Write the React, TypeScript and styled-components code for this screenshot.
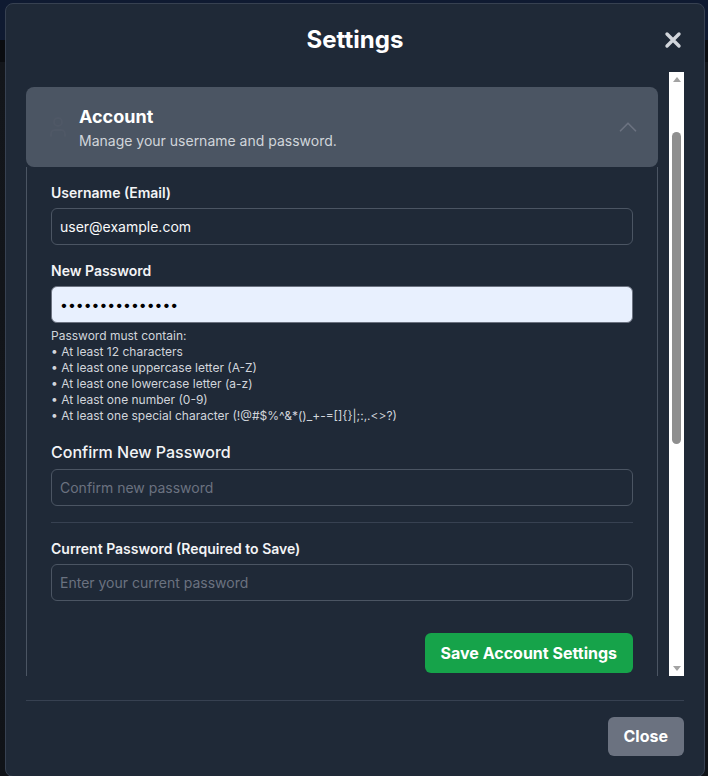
import React, { useLayoutEffect, useRef } from "react";
import styled, { createGlobalStyle } from "styled-components";
import { ChevronUp, ChevronDown, User, Palette, Bell, Shield, Database } from "lucide-react";

const GlobalStyle = createGlobalStyle`
  * { box-sizing: border-box; }
  html, body { margin: 0; padding: 0; }
  body {
    background: #0c0f14;
    font-family: Inter, "Noto Sans", sans-serif;
    overflow: hidden;
  }
`;

const Page = styled.div`
  width: 708px;
  height: 776px;
  background: linear-gradient(
    to bottom,
    #0f1a31 0px,
    #0f1a31 40px,
    #0a0c10 40px,
    #0a0c10 62px,
    #13161b 62px,
    #101318 100%
  );
  padding: 3px 3px 0 5px;
  overflow: hidden;
`;

const Modal = styled.div`
  width: 700px;
  height: 774px;
  background: #1f2937;
  border: 1px solid #374151;
  border-radius: 8px;
  padding: 20px;
  display: flex;
  flex-direction: column;
`;

const Header = styled.div`
  position: relative;
  height: 32px;
  margin-bottom: 16px;
  display: flex;
  align-items: center;
  justify-content: center;
`;

const Title = styled.h2`
  margin: 0;
  font-size: 24px;
  line-height: 32px;
  font-weight: 700;
  color: #ffffff;
`;

const CloseIcon = styled.button`
  position: absolute;
  right: 2px;
  top: 50%;
  transform: translateY(-50%);
  background: none;
  border: none;
  padding: 0;
  display: flex;
  color: #d1d5db;
  cursor: pointer;
`;

const ScrollFrame = styled.div`
  flex: 1;
  min-height: 0;
  display: flex;
`;

const Viewport = styled.div`
  flex: 1;
  min-width: 0;
  overflow: hidden;
  padding-right: 11px;
`;

const Scrollbar = styled.div`
  width: 15px;
  flex-shrink: 0;
  background: #ffffff;
  display: flex;
  flex-direction: column;
`;

const ArrowButton = styled.div<{ $down?: boolean }>`
  height: 15px;
  flex-shrink: 0;
  display: flex;
  align-items: center;
  justify-content: center;
  &::before {
    content: "";
    width: 0;
    height: 0;
    border-left: 4px solid transparent;
    border-right: 4px solid transparent;
    ${(p) =>
      p.$down ? "border-top: 5px solid #a3a3a3;" : "border-bottom: 5px solid #a3a3a3;"}
  }
`;

const Track = styled.div`
  flex: 1;
  display: flex;
  flex-direction: column;
  align-items: center;
`;

const Thumb = styled.div`
  width: 9px;
  border-radius: 5px;
  background: #8f8f8f;
`;

const SectionList = styled.div`
  display: flex;
  flex-direction: column;
  gap: 16px;
  padding-bottom: 15px;
`;

const Intro = styled.p`
  margin: 0;
  min-height: 86px;
  padding-top: 24px;
  font-size: 14px;
  line-height: 20px;
  color: #9ca3af;
`;

const Section = styled.div`
  display: flex;
  flex-direction: column;
`;

const SectionHeader = styled.div`
  height: 80px;
  background: #4b5563;
  border-radius: 8px;
  padding: 0 15px 0 20px;
  display: flex;
  align-items: center;
  gap: 9px;
`;

const HeaderIcon = styled.span`
  display: flex;
  color: #4f5866;
`;

const HeaderText = styled.div`
  flex: 1;
  display: flex;
  flex-direction: column;
`;

const SectionTitle = styled.div`
  font-size: 18px;
  line-height: 28px;
  font-weight: 700;
  color: #ffffff;
`;

const SectionDesc = styled.div`
  font-size: 14px;
  line-height: 20px;
  color: #d1d5db;
`;

const Chevron = styled.span`
  display: flex;
  color: #6b7280;
`;

const Panel = styled.div`
  border: 1px solid #4b5563;
  border-top: none;
  border-radius: 0 0 8px 8px;
  padding: 16px 24px 24px;
`;

const Form = styled.div`
  display: flex;
  flex-direction: column;
  gap: 16px;
`;

const Field = styled.div`
  display: flex;
  flex-direction: column;
`;

const Label = styled.label<{ $large?: boolean }>`
  display: block;
  font-size: ${(p) => (p.$large ? "16px" : "14px")};
  line-height: ${(p) => (p.$large ? "24px" : "20px")};
  font-weight: ${(p) => (p.$large ? 500 : 600)};
  color: #f3f4f6;
  margin-bottom: 5px;
`;

const Input = styled.input<{ $filled?: boolean }>`
  width: 100%;
  height: 37px;
  padding: 0 8px;
  border: 1px solid ${(p) => (p.$filled ? "#6b7280" : "#4b5563")};
  border-radius: 6px;
  background: ${(p) => (p.$filled ? "#e8f0fe" : "transparent")};
  color: ${(p) => (p.$filled ? "#000000" : "#f9fafb")};
  font-family: Inter, "Noto Sans", sans-serif;
  font-size: 14px;
  outline: none;
  &::placeholder {
    color: #6b7280;
  }
`;

const Help = styled.div`
  margin-top: 5px;
  font-size: 12px;
  line-height: 16px;
  color: #d1d5db;
`;

const Divider = styled.hr`
  margin: 0;
  border: none;
  height: 1px;
  background: #374151;
`;

const SaveButton = styled.button`
  align-self: flex-end;
  margin-top: 16px;
  padding: 8px 16px;
  border: none;
  border-radius: 6px;
  background: #16a34a;
  color: #ffffff;
  font-family: Inter, "Noto Sans", sans-serif;
  font-size: 16px;
  line-height: 24px;
  font-weight: 700;
  cursor: pointer;
`;

const Footer = styled.div`
  margin-top: 24px;
  border-top: 1px solid #374151;
  padding-top: 16px;
  display: flex;
  justify-content: flex-end;
`;

const FooterButton = styled.button`
  padding: 8px 16px;
  border: none;
  border-radius: 6px;
  background: #6b7280;
  color: #ffffff;
  font-family: Inter, "Noto Sans", sans-serif;
  font-size: 16px;
  line-height: 23px;
  font-weight: 700;
  cursor: pointer;
`;

const rules = [
  "At least 12 characters",
  "At least one uppercase letter (A-Z)",
  "At least one lowercase letter (a-z)",
  "At least one number (0-9)",
  "At least one special character (!@#$%^&*()_+-=[]{}|;:,.<>?)",
];

const collapsed = [
  { title: "Appearance", desc: "Customize theme and layout.", icon: Palette },
  { title: "Notifications", desc: "Choose what you get notified about.", icon: Bell },
  { title: "Privacy", desc: "Control your data sharing preferences.", icon: Shield },
  { title: "Data & Storage", desc: "Export or clear your saved data.", icon: Database },
];

export default function App() {
  const scrollRef = useRef<HTMLDivElement>(null);
  useLayoutEffect(() => {
    if (scrollRef.current) scrollRef.current.scrollTop = 87;
  }, []);

  return (
    <>
      <GlobalStyle />
      <Page>
        <Modal>
          <Header>
            <Title>Settings</Title>
            <CloseIcon aria-label="Close">
              <svg width="18" height="18" viewBox="0 0 18 18">
                <path d="M3 3 L15 15 M15 3 L3 15" stroke="currentColor" strokeWidth="3.4" strokeLinecap="round" />
              </svg>
            </CloseIcon>
          </Header>
          <ScrollFrame>
            <Viewport ref={scrollRef}>
              <SectionList>
                <Intro>Manage your account and application preferences.</Intro>
                <Section>
                  <SectionHeader>
                    <HeaderIcon>
                      <User size={24} />
                    </HeaderIcon>
                    <HeaderText>
                      <SectionTitle>Account</SectionTitle>
                      <SectionDesc>Manage your username and password.</SectionDesc>
                    </HeaderText>
                    <Chevron>
                      <ChevronUp size={30} strokeWidth={1.4} />
                    </Chevron>
                  </SectionHeader>
                  <Panel>
                    <Form>
                      <Field>
                        <Label>Username (Email)</Label>
                        <Input type="email" defaultValue="user@example.com" />
                      </Field>
                      <Field>
                        <Label>New Password</Label>
                        <Input $filled type="password" defaultValue="abcdefghijklmno" />
                        <Help>
                          <div>Password must contain:</div>
                          {rules.map((r) => (
                            <div key={r}>• {r}</div>
                          ))}
                        </Help>
                      </Field>
                      <Field>
                        <Label $large>Confirm New Password</Label>
                        <Input type="password" placeholder="Confirm new password" />
                      </Field>
                      <Divider />
                      <Field>
                        <Label>Current Password (Required to Save)</Label>
                        <Input type="password" placeholder="Enter your current password" />
                      </Field>
                      <SaveButton>Save Account Settings</SaveButton>
                    </Form>
                  </Panel>
                </Section>
                {collapsed.map(({ title, desc, icon: Icon }) => (
                  <Section key={title}>
                    <SectionHeader>
                      <HeaderIcon>
                        <Icon size={24} />
                      </HeaderIcon>
                      <HeaderText>
                        <SectionTitle>{title}</SectionTitle>
                        <SectionDesc>{desc}</SectionDesc>
                      </HeaderText>
                      <Chevron>
                        <ChevronDown size={30} strokeWidth={1.4} />
                      </Chevron>
                    </SectionHeader>
                  </Section>
                ))}
              </SectionList>
            </Viewport>
            <Scrollbar aria-hidden>
              <ArrowButton />
              <Track>
                <Thumb style={{ marginTop: 45, height: 312 }} />
              </Track>
              <ArrowButton $down />
            </Scrollbar>
          </ScrollFrame>
          <Footer>
            <FooterButton>Close</FooterButton>
          </Footer>
        </Modal>
      </Page>
    </>
  );
}
